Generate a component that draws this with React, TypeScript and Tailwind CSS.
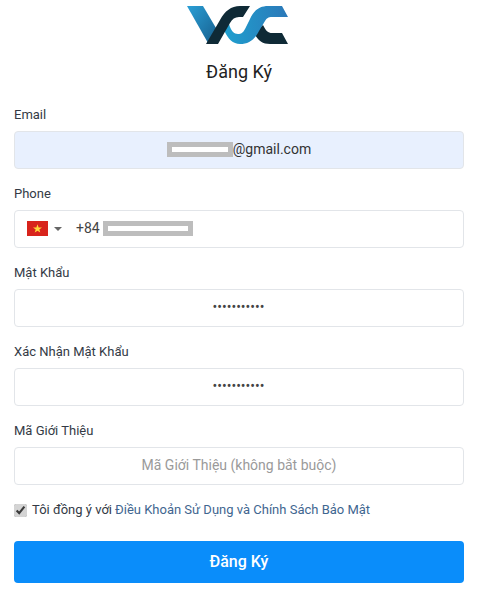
import React from "react";

const font = { fontFamily: "Roboto, sans-serif" };

function Logo() {
  return (
    <svg width="110" height="50" viewBox="0 0 110 50" className="block">
      <defs>
        <linearGradient id="a" x1="0" y1="0" x2="1" y2="1">
          <stop offset="0" stopColor="#2a9fd6" />
          <stop offset="1" stopColor="#17608f" />
        </linearGradient>
        <linearGradient id="b" x1="0" y1="0" x2="1" y2="0">
          <stop offset="0" stopColor="#1fa0cf" />
          <stop offset="1" stopColor="#2b78b8" />
        </linearGradient>
      </defs>
      <path d="M3 6H19L32 28L24 43Z" fill="url(#a)" />
      <path d="M70 33C74 41 79 44 86 44H104L98 33H88C84 33 82 31 79 25Z" fill="#0f2a36" />
      <path d="M45 24C47 31 50 34 54 34C57 34 59 33 61 29L66 19C70 10 76 6 84 6H98L104 17H88C84 17 83 18 81 21L75 31C71 39 65 44 56 44C49 44 44 39 40 30Z" fill="url(#b)" />
      <path d="M22 44L36 20C41 11 47 6 56 6H66L59 17H55C51 17 48 19 46 23L34 44Z" fill="#0f2a36" />
    </svg>
  );
}

function Field({ label, children }: { label: string; children: React.ReactNode }) {
  return (
    <div className="flex flex-col">
      <label className="h-[17px] leading-[18px] text-[13px] text-[#333a45] mb-[8px]">{label}</label>
      {children}
    </div>
  );
}

const box = "h-[38px] w-full rounded-[4px] border border-[#e2e5e9] flex items-center justify-center text-[14px] pb-[1px]";

function Dots() {
  return (
    <div className={box + " bg-white"}>
      <span className="text-[#444] text-[14px] mr-[1px]">•••••••••••</span>
    </div>
  );
}

export default function App() {
  return (
    <div style={font} className="w-[485px] h-[601px] bg-white px-[14px] overflow-hidden">
      <div className="w-[450px] flex flex-col">
        <div className="flex justify-center">
          <Logo />
        </div>
        <h1 className="text-center text-[18px] leading-[24px] text-[#222] mt-[10px]">Đăng Ký</h1>
        <form className="flex flex-col gap-[16px] mt-[22px]">
          <Field label="Email">
            <div className={box + " bg-[#e8f0fe] text-[#333]"}>
              <span className="inline-block w-[66px] h-[15px] border-[5px] border-[#bdbdbd] bg-white" />
              <span>@gmail.com</span>
            </div>
          </Field>
          <Field label="Phone">
            <div className="h-[38px] w-full rounded-[4px] border border-[#e2e5e9] bg-white flex items-center pl-[12px] pb-[1px] text-[14px] text-[#444]">
              <svg width="21" height="15" viewBox="0 0 21 15" className="block">
                <rect width="21" height="15" fill="#d8241c" />
                <polygon points="10.5,3.2 11.6,6.4 15,6.4 12.3,8.4 13.3,11.6 10.5,9.7 7.7,11.6 8.7,8.4 6,6.4 9.4,6.4" fill="#ffd83a" />
              </svg>
              <span className="ml-[6px] w-0 h-0 border-x-[4px] border-x-transparent border-t-[4px] border-t-[#666]" />
              <span className="ml-[14px]">+84</span>
              <span className="ml-[3px] inline-block w-[90px] h-[15px] border-[5px] border-[#bdbdbd] bg-white" />
            </div>
          </Field>
          <Field label="Mật Khẩu">
            <Dots />
          </Field>
          <Field label="Xác Nhận Mật Khẩu">
            <Dots />
          </Field>
          <Field label="Mã Giới Thiệu">
            <div className={box + " bg-white text-[#9a9a9a]"}>Mã Giới Thiệu (không bắt buộc)</div>
          </Field>
        </form>
        <div className="flex items-center mt-[17px] h-[16px] text-[13px]">
          <input type="checkbox" defaultChecked readOnly className="w-[13px] h-[13px] m-0 accent-[#d4d4d4]" />
          <span className="ml-[5px] text-[#333a45]">Tôi đồng ý với</span>
          <span className="ml-[3px] text-[#3f6690]">Điều Khoản Sử Dụng và Chính Sách Bảo Mật</span>
        </div>
        <button type="button" className="mt-[23px] h-[42px] w-full rounded-[4px] bg-[#0a8dfa] text-white text-[16px] font-medium">
          Đăng Ký
        </button>
      </div>
    </div>
  );
}
